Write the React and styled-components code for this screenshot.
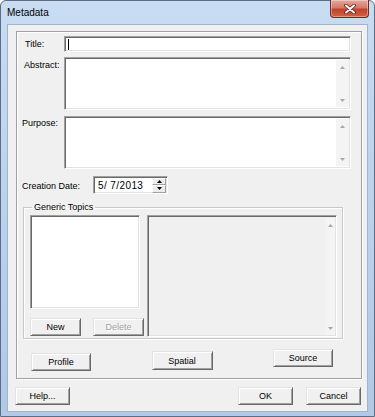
import styled, { createGlobalStyle } from "styled-components";

const GlobalStyle = createGlobalStyle`
  html, body {
    margin: 0;
    padding: 0;
    background: #ffffff;
  }
  body {
    font-family: "Liberation Sans", Arial, sans-serif;
    color: #000;
  }
`;

const Window = styled.div`
  width: 375px;
  height: 417px;
  box-sizing: border-box;
  display: flex;
  flex-direction: column;
  padding: 0 7px 5px 7px;
  border: 1px solid #5d6e84;
  border-radius: 6px 6px 0 0;
  background: linear-gradient(180deg, #c8dcf2 0%, #bcd3ed 45%, #afc9e7 100%);
`;

const TitleBar = styled.div`
  height: 24px;
  display: flex;
  justify-content: space-between;
  align-items: flex-start;
  flex-shrink: 0;
`;

const Caption = styled.span`
  margin: 6px 0 0 -1px;
  font-size: 10px;
  line-height: 12px;
  color: #000;
`;

const CloseButton = styled.div`
  width: 39px;
  height: 18px;
  margin: -1px -2px 0 0;
  box-sizing: border-box;
  display: flex;
  align-items: center;
  justify-content: center;
  border: 1px solid #6b2c27;
  border-top: none;
  border-radius: 0 0 4px 4px;
  background: linear-gradient(180deg, #e8a89b 0%, #d47a6a 45%, #c2412e 55%, #d0653f 100%);
  box-shadow: inset 0 0 0 1px rgba(255, 255, 255, 0.35);
`;

const Client = styled.div`
  flex: 1;
  display: flex;
  flex-direction: column;
  background: #f0f0f0;
  box-shadow: 0 0 0 1px #9fb5cf;
`;

const Panel = styled.div`
  height: 348px;
  box-sizing: border-box;
  margin: 6px 5px 0 8px;
  padding: 4px 10px 0 0;
  display: flex;
  flex-direction: column;
  border: 1px solid #a0a0a0;
  box-shadow: inset 1px 1px 0 #fff, 1px 1px 0 #fff;
`;

const Field = styled.div`
  display: flex;
  align-items: ${(p) => (p.$top ? "flex-start" : "center")};
  margin-top: ${(p) => p.$gap || 0}px;
`;

const Label = styled.label`
  width: ${(p) => p.$width || 47}px;
  flex-shrink: 0;
  box-sizing: border-box;
  padding-left: ${(p) => p.$indent}px;
  padding-top: ${(p) => p.$drop || 0}px;
  font-size: 9px;
  line-height: 11px;
  white-space: nowrap;
`;

const sunken = `
  box-sizing: border-box;
  border-top: 1px solid #a0a0a0;
  border-left: 1px solid #a0a0a0;
  border-right: 1px solid #ffffff;
  border-bottom: 1px solid #ffffff;
  box-shadow: inset 1px 1px 0 #696969, inset -1px -1px 0 #e3e3e3;
`;

const LineEdit = styled.div`
  ${sunken}
  flex: 1;
  height: 16px;
  background: #fff;
  display: flex;
  align-items: center;
  padding-left: 3px;
`;

const Caret = styled.span`
  width: 1px;
  height: 11px;
  background: #000;
`;

const TextBox = styled.div`
  ${sunken}
  flex: 1;
  height: ${(p) => p.$height}px;
  display: flex;
  padding: 2px 1px 2px 2px;
  background: ${(p) => (p.$disabled ? "#f0f0f0" : "#fff")};
`;

const EditArea = styled.div`
  flex: 1;
`;

const ScrollTrack = styled.div`
  width: ${(p) => p.$width || 13}px;
  display: flex;
  flex-direction: column;
  justify-content: space-between;
  align-items: center;
  padding: 6px 0 5px;
  background: #f4f4f4;
`;

const DateBox = styled.div`
  ${sunken}
  width: 75px;
  height: 18px;
  margin-left: 0;
  display: flex;
  align-items: center;
  justify-content: space-between;
  padding: 2px 1px 2px 4px;
  background: #fff;
  font-size: 10px;
  letter-spacing: 0.4px;
  white-space: pre;
`;

const Spinner = styled.div`
  width: 14px;
  height: 15px;
  display: flex;
  flex-direction: column;
`;

const SpinButton = styled.div`
  flex: 1;
  display: flex;
  align-items: center;
  justify-content: center;
  box-sizing: border-box;
  background: #ececec;
  border-top: 1px solid #fff;
  border-left: 1px solid #fff;
  border-right: 1px solid #a0a0a0;
  border-bottom: 1px solid #a0a0a0;
`;

const Group = styled.fieldset`
  margin: 8px 8px 0 6px;
  padding: 3px 5px 1px 6px;
  border: 1px solid #c8c8c8;
  box-shadow: inset 1px 1px 0 #fff, 1px 1px 0 #fff;
  min-width: 0;
`;

const Legend = styled.legend`
  margin-left: 2px;
  padding: 0 2px;
  font-size: 9px;
  line-height: 10px;
`;

const GroupBody = styled.div`
  display: flex;
  gap: 3px;
`;

const TopicColumn = styled.div`
  width: 114px;
  display: flex;
  flex-direction: column;
`;

const ListBox = styled.div`
  ${sunken}
  width: 110px;
  height: 94px;
  background: #fff;
`;

const ButtonRow = styled.div`
  display: flex;
  gap: ${(p) => p.$gap || 0}px;
  margin-top: ${(p) => p.$top || 0}px;
  align-items: flex-start;
`;

const Button = styled.button`
  width: ${(p) => p.$width || 55}px;
  height: ${(p) => p.$height || 18}px;
  margin-top: ${(p) => p.$offset || 0}px;
  padding: 0;
  box-sizing: border-box;
  background: #f0f0f0;
  border-top: 1px solid #e3e3e3;
  border-left: 1px solid #e3e3e3;
  border-right: 1px solid #696969;
  border-bottom: 1px solid #696969;
  box-shadow: inset 1px 1px 0 #fff, inset -1px -1px 0 #a0a0a0;
  font-family: "Liberation Sans", Arial, sans-serif;
  font-size: 9px;
  color: ${(p) => (p.disabled ? "#a0a0a0" : "#000")};
  text-shadow: ${(p) => (p.disabled ? "1px 1px 0 #fff" : "none")};
`;

const DetailPane = styled(TextBox)`
  height: 122px;
  padding: 2px 1px 1px 2px;
`;

const BottomRow = styled.div`
  display: flex;
  justify-content: space-between;
  align-items: flex-start;
  margin-top: 10px;
  padding: 0 18px 0 14px;
`;

const Footer = styled.div`
  display: flex;
  align-items: center;
  margin-top: 8px;
  padding: 0 6px 0 7px;
`;

const Spacer = styled.div`
  flex: 1;
`;

const Arrow = ({ down, color = "#a8a8a8" }) => (
  <svg width="5" height="3" viewBox="0 0 5 3">
    <polygon points={down ? "0,0 5,0 2.5,3" : "0,3 5,3 2.5,0"} fill={color} />
  </svg>
);

const Scroll = ({ width }) => (
  <ScrollTrack $width={width}>
    <Arrow />
    <Arrow down />
  </ScrollTrack>
);

const CloseGlyph = () => (
  <svg width="12" height="10" viewBox="0 0 12 10">
    <path d="M2 1.5 L10 8.5 M10 1.5 L2 8.5" stroke="#5a1d16" strokeWidth="3.6" strokeLinecap="round" />
    <path d="M2 1.5 L10 8.5 M10 1.5 L2 8.5" stroke="#ffffff" strokeWidth="2" strokeLinecap="round" />
  </svg>
);

export default function App() {
  return (
    <>
      <GlobalStyle />
      <Window>
        <TitleBar>
          <Caption>Metadata</Caption>
          <CloseButton>
            <CloseGlyph />
          </CloseButton>
        </TitleBar>
        <Client>
          <Panel>
            <Field>
              <Label $indent={8}>Title:</Label>
              <LineEdit>
                <Caret />
              </LineEdit>
            </Field>
            <Field $top $gap={5}>
              <Label $indent={7} $drop={3}>Abstract:</Label>
              <TextBox $height={53}>
                <EditArea />
                <Scroll />
              </TextBox>
            </Field>
            <Field $top $gap={6}>
              <Label $indent={5} $drop={2}>Purpose:</Label>
              <TextBox $height={53}>
                <EditArea />
                <Scroll />
              </TextBox>
            </Field>
            <Field $gap={7}>
              <Label $indent={5} $width={76} $drop={2}>Creation Date:</Label>
              <DateBox>
                <span>5/ 7/2013</span>
                <Spinner>
                  <SpinButton>
                    <Arrow color="#000" />
                  </SpinButton>
                  <SpinButton>
                    <Arrow down color="#000" />
                  </SpinButton>
                </Spinner>
              </DateBox>
            </Field>
            <Group>
              <Legend>Generic Topics</Legend>
              <GroupBody>
                <TopicColumn>
                  <ListBox />
                  <ButtonRow $gap={12} $top={9}>
                    <Button $width={51}>New</Button>
                    <Button $width={51} disabled>
                      Delete
                    </Button>
                  </ButtonRow>
                </TopicColumn>
                <DetailPane $disabled>
                  <EditArea />
                  <Scroll width={10} />
                </DetailPane>
              </GroupBody>
            </Group>
            <BottomRow>
              <Button $width={60} $offset={4}>Profile</Button>
              <Button $width={61} $height={19} $offset={2}>Spatial</Button>
              <Button $width={60}>Source</Button>
            </BottomRow>
          </Panel>
          <Footer>
            <Button>Help...</Button>
            <Spacer />
            <ButtonRow $gap={13}>
              <Button>OK</Button>
              <Button>Cancel</Button>
            </ButtonRow>
          </Footer>
        </Client>
      </Window>
    </>
  );
}
